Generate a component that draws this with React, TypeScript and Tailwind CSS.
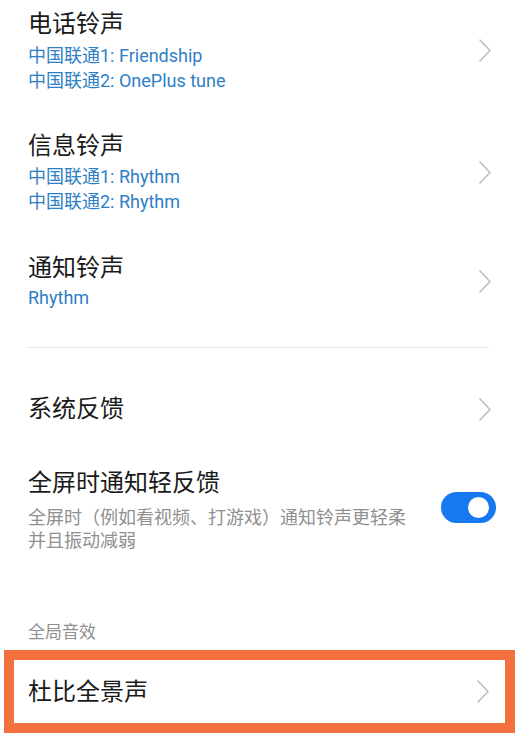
import { ReactNode } from 'react'

const font = { fontFamily: "Roboto, 'Noto Sans CJK SC', sans-serif" }

function Chevron() {
  return (
    <svg width="12" height="23" viewBox="0 0 12 23" fill="none" className="shrink-0">
      <path d="M1 1l10 10.5L1 22" stroke="#bdbdbd" strokeWidth="1.6" strokeLinecap="round" strokeLinejoin="round" />
    </svg>
  )
}

function Toggle() {
  return (
    <div className="w-[55px] h-[31px] rounded-full bg-[#1679f0] flex items-center justify-end pr-[7px] shrink-0">
      <div className="w-[21px] h-[21px] rounded-full bg-white" />
    </div>
  )
}

function Row({
  title,
  children,
  right,
  className = '',
}: {
  title: string
  children?: ReactNode
  right: ReactNode
  className?: string
}) {
  return (
    <div className={`flex items-center justify-between ${className}`}>
      <div>
        <div className="text-[24px] leading-[32px] text-[#1a1a1a]">{title}</div>
        {children}
      </div>
      {right}
    </div>
  )
}

function Sub({ children }: { children: ReactNode }) {
  return <div className="text-[18px] leading-[25px] text-[#2e80c6]">{children}</div>
}

export default function App() {
  return (
    <div className="w-[529px] h-[742px] bg-white overflow-hidden" style={font}>
      <div className="pl-[28px] pr-[38px] pt-[8px]">
        <Row title="电话铃声" right={<Chevron />}>
          <div className="mt-[3px]">
            <Sub>中国联通1: Friendship</Sub>
            <Sub>中国联通2: OnePlus tune</Sub>
          </div>
        </Row>

        <Row title="信息铃声" right={<Chevron />} className="mt-[37px]">
          <div className="mt-[2px]">
            <Sub>中国联通1: Rhythm</Sub>
            <Sub>中国联通2: Rhythm</Sub>
          </div>
        </Row>

        <Row title="通知铃声" right={<Chevron />} className="mt-[38px]">
          <div className="mt-[1px]">
            <Sub>Rhythm</Sub>
          </div>
        </Row>
      </div>

      <div className="ml-[27px] mr-[40px] mt-[37px] h-px bg-[#ececec]" />

      <div className="pl-[28px] pr-[38px]">
        <Row title="系统反馈" right={<Chevron />} className="mt-[45px]" />
      </div>

      <div className="pl-[28px] pr-[33px] mt-[42px] flex items-start justify-between">
        <div>
          <div className="text-[24px] leading-[32px] text-[#1a1a1a]">全屏时通知轻反馈</div>
          <div className="mt-[7px] text-[18px] leading-[23px] text-[#8f8f8f]">
            <div>全屏时（例如看视频、打游戏）通知铃声更轻柔</div>
            <div>并且振动减弱</div>
          </div>
        </div>
        <div className="mt-[25px]">
          <Toggle />
        </div>
      </div>

      <div className="pl-[28px] mt-[68px] text-[17px] leading-[24px] text-[#8f8f8f]">全局音效</div>

      <div className="ml-[4px] mr-[14px] mt-[6px] border-[10px] border-[#f3703f] h-[83px] flex items-center justify-between pl-[14px] pr-[16px]">
        <div className="text-[24px] leading-[32px] text-[#1a1a1a]">杜比全景声</div>
        <Chevron />
      </div>
    </div>
  )
}
